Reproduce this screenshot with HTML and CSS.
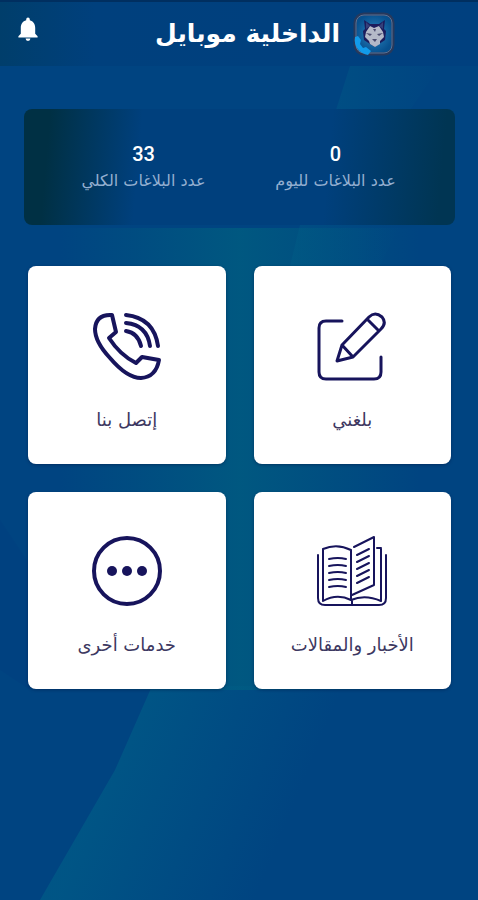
FILE: index.html
```
<!DOCTYPE html>
<html lang="ar" dir="rtl">
<head>
  <meta charset="UTF-8" />
  <meta name="viewport" content="width=device-width, initial-scale=1.0" />
  <title>الداخلية موبايل</title>
  <link rel="stylesheet" href="styles.css">
</head>
<body>
  <!-- Background light rays -->
  <svg class="rays" viewBox="0 0 478 900" preserveAspectRatio="none" aria-hidden="true">
    <defs>
      <linearGradient id="ray" x1="0" y1="0" x2="1" y2="0">
        <stop offset="0" stop-color="#006080" stop-opacity="0" />
        <stop offset="0.5" stop-color="#006080" stop-opacity="0.7" />
        <stop offset="1" stop-color="#006080" stop-opacity="0" />
      </linearGradient>
      <linearGradient id="rayTop" x1="0" y1="0" x2="1" y2="0">
        <stop offset="0" stop-color="#006088" stop-opacity="0.35" />
        <stop offset="1" stop-color="#006088" stop-opacity="0" />
      </linearGradient>
      <linearGradient id="rayEnd" gradientUnits="userSpaceOnUse" x1="110" y1="770" x2="280" y2="840">
        <stop offset="0" stop-color="#006088" stop-opacity="0.6" />
        <stop offset="1" stop-color="#006088" stop-opacity="0" />
      </linearGradient>
    </defs>
    <path d="M60 228H420V690H60Z" fill="url(#ray)" />
    <path d="M350 66H440L410 110H336Z" fill="url(#rayTop)" />
    <path d="M300 225H400L380 266H290Z" fill="url(#rayTop)" />
    <path d="M152 686L115 770L40 900H400V686Z" fill="url(#rayEnd)" />
    <path d="M0 520L60 610L30 690L0 670Z" fill="#003f80" opacity="0.4" />
  </svg>

  <header class="header">
    <div class="brand">
      <svg class="logo" viewBox="0 0 44 44" aria-hidden="true">
        <defs>
          <radialGradient id="logoFill">
            <stop offset="0" stop-color="#2b83bd" />
            <stop offset="1" stop-color="#07508e" />
          </radialGradient>
        </defs>
        <rect x="3" y="2" width="38" height="40" rx="9" fill="url(#logoFill)" stroke="#27395c" stroke-width="3" />
        <rect x="4" y="3" width="36" height="38" rx="8" fill="none" stroke="#5c7294" stroke-width="1" />
        <path d="M12 8L18 12H27L33 8L32 17L34 19L33 28L27 32L23 35L18 32L12 28L11 19L13 17Z" fill="#1c1c5c" />
        <path d="M18 14L22 16L27 14L31 20L32 25L28 29L28 32L23 35L18 32L17 29L13 25L14 20Z" fill="#b4b9c8" />
        <path d="M14 21L20 22L18 24ZM31 21L25 22L27 24ZM20 27H25L23 30ZM21 17H24L23 20Z" fill="#4b4c70" />
        <path d="M14 10L18 14L14 17ZM31 10L27 14L31 17Z" fill="#34407a" />
        <path d="M3 25C1 34 8 42 16 43L19 39L14 35L11 36L8 32L9 28L6 24Z" fill="#129bea" />
      </svg>
      <h1>الداخلية موبايل</h1>
    </div>
    <button class="bell" type="button" aria-label="الإشعارات">
      <svg viewBox="4 2 16 20" aria-hidden="true">
        <path d="M12 22a2 2 0 0 0 2-2h-4a2 2 0 0 0 2 2zm6-6v-5c0-3.070-1.640-5.640-4.500-6.320V4a1.500 1.500 0 0 0-3 0v.680C7.630 5.360 6 7.920 6 11v5l-2 2v1h16v-1z" fill="#fff" />
      </svg>
    </button>
  </header>

  <main>
    <section class="stats">
      <div class="stat">
        <strong>0</strong>
        <span>عدد البلاغات لليوم</span>
      </div>
      <div class="stat">
        <strong>33</strong>
        <span>عدد البلاغات الكلي</span>
      </div>
    </section>

    <nav class="services">
      <a class="card" href="#report">
        <svg class="icon" viewBox="0 0 72 72" aria-hidden="true">
          <path d="M26 11H10Q3 11 3 18V62Q3 69 10 69H58Q65 69 65 62V47" />
          <path d="M21 51L26 35L53 7Q59 1 66 7Q71 13 65 19L37 47ZM26 35L37 47M51 9L63 21" />
        </svg>
        <span>بلغني</span>
      </a>
      <a class="card" href="#contact">
        <svg class="icon bold" viewBox="0 0 72 72" aria-hidden="true">
          <path d="M21 5Q5 4 4 19Q4 32 19 48Q36 68 50 68Q65 67 68 50L51 47L45 53Q29 45 18 28L25 22Z" />
          <path d="M35 5Q63 8 67 36M35 13Q56 15 59 36M35 21Q47 23 50 36" />
        </svg>
        <span>إتصل بنا</span>
      </a>
      <a class="card" href="#news">
        <svg class="icon book" viewBox="0 0 72 72" aria-hidden="true">
          <path d="M2 20V63Q2 70 9 70H63Q70 70 70 63V20" />
          <path d="M7 66V14Q21 8 35 15V65Q21 58 7 66ZM35 65Q49 59 65 66V14M61 13H65M38 12L58 2V50L36 60M36 66V70" />
          <path d="M13 24Q22 22 30 24M13 31Q22 29 30 31M13 38Q22 36 30 38M13 45Q22 43 30 45M13 52Q22 50 30 52" />
          <path d="M41 20L53 14M41 27L53 21M41 34L53 28M41 41L53 35M41 48L53 42" />
        </svg>
        <span>الأخبار والمقالات</span>
      </a>
      <a class="card" href="#more">
        <svg class="icon bold" viewBox="0 0 72 72" aria-hidden="true">
          <circle cx="36" cy="36" r="33" />
          <g class="dots">
            <circle cx="21" cy="36" r="5" />
            <circle cx="36" cy="36" r="5" />
            <circle cx="51" cy="36" r="5" />
          </g>
        </svg>
        <span>خدمات أخرى</span>
      </a>
    </nav>
  </main>
</body>
</html>
```

FILE: styles.css
```
* {
  box-sizing: border-box;
}

body {
  margin: 0;
  min-height: 100vh;
  position: relative;
  font-family: "DejaVu Sans", sans-serif;
  background: #004481;
}

.rays {
  position: absolute;
  top: 0;
  left: 0;
  width: 100%;
  height: 100%;
  z-index: -1;
}

.header {
  display: flex;
  justify-content: space-between;
  align-items: center;
  height: 66px;
  padding: 0 82px 0 16px;
  border-top: 2px solid #002f60;
  background: linear-gradient(90deg, #003e6b, #00407d 20%, #00407f);
}

.brand {
  display: flex;
  align-items: center;
  gap: 12px;
}

.logo {
  width: 44px;
  height: 44px;
}

h1 {
  margin: 0;
  font-size: 25px;
  line-height: 44px;
  color: #fff;
}

.bell {
  width: 24px;
  height: 24px;
  margin-bottom: 10px;
  padding: 0;
  border: none;
  background: none;
  cursor: pointer;
}

.bell svg {
  display: block;
  width: 24px;
  height: 24px;
}

main {
  padding: 43px 23px 24px 24px;
}

.stats {
  display: flex;
  justify-content: center;
  align-items: center;
  gap: 68px;
  height: 116px;
  margin-bottom: 41px;
  border-radius: 8px;
  background: linear-gradient(95deg, #003044 6%, #00407d 27%, #00407d 70%, #003553 96%);
}

.stat {
  display: flex;
  flex-direction: column;
  align-items: center;
  width: 124px;
  white-space: nowrap;
}

.stat strong {
  font-family: Roboto, sans-serif;
  font-size: 20px;
  font-weight: 500;
  line-height: 28px;
  color: #fff;
}

.stat span {
  font-size: 16px;
  line-height: 26px;
  color: #94afd0;
}

.services {
  display: grid;
  grid-template-columns: 1fr 1fr;
  gap: 28px;
  padding: 0 4px;
}

.card {
  display: flex;
  flex-direction: column;
  align-items: center;
  justify-content: center;
  gap: 24px;
  aspect-ratio: 1;
  padding-top: 14px;
  border-radius: 8px;
  background: #fff;
  box-shadow: 0 1px 3px rgba(0, 25, 70, 0.5);
  font-size: 18px;
  line-height: 28px;
  color: #3d3861;
  text-decoration: none;
}

.icon {
  width: 72px;
  height: 72px;
  fill: none;
  stroke: #17145c;
  stroke-width: 3;
  stroke-linejoin: round;
  stroke-linecap: round;
}

.bold {
  stroke-width: 4;
}

.book {
  stroke-width: 2;
}

.dots {
  fill: #17145c;
  stroke: none;
}
```
